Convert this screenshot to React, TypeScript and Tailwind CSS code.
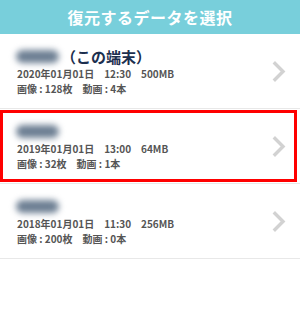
import React from 'react';

interface Backup {
    id: number;
    thisDevice: boolean;
    date: string;
    time: string;
    size: string;
    images: number;
    videos: number;
}

const backups: Backup[] = [
    { id: 0, thisDevice: true, date: '2020年01月01日', time: '12:30', size: '500MB', images: 128, videos: 4 },
    { id: 1, thisDevice: false, date: '2019年01月01日', time: '13:00', size: '64MB', images: 32, videos: 1 },
    { id: 2, thisDevice: false, date: '2018年01月01日', time: '11:30', size: '256MB', images: 200, videos: 0 },
];

const Chevron = () => (
    <svg width="15" height="21" viewBox="0 0 15 21" fill="none">
        <path d="M3 2.5 L11 10.5 L3 18.5" stroke="#d2d2d2" strokeWidth="3.4" strokeLinecap="square" strokeLinejoin="miter" />
    </svg>
);

const BackupRow = ({ item, selected }: { item: Backup; selected: boolean }) => (
    <div className="relative flex items-center h-[75px] border-b border-[#e8e8e8] pl-[17px] pr-[13px]">
        <div className="flex-1 flex flex-col">
            <div className="flex items-center h-[20px]">
                {/* device name is blurred out */}
                <div className="w-[43px] h-[13px] -ml-[1px] rounded-full bg-[#6d7f93] blur-[3px]" />
                {item.thisDevice && (
                    <span className="ml-[2px] text-[15px] font-bold text-[#1c2f4f] leading-none">（この端末）</span>
                )}
            </div>
            <p className="text-[10px] font-bold text-[#555] leading-[14px] mt-[1px] whitespace-pre">
                {`${item.date}　${item.time}　${item.size}`}
            </p>
            <p className="text-[10px] font-bold text-[#555] leading-[15px] whitespace-pre">
                {`画像 : ${item.images}枚　動画 : ${item.videos}本`}
            </p>
        </div>
        <Chevron />
        {selected && (
            <div className="absolute left-0 right-[3px] top-[1px] bottom-[1px] border-[3px] border-[#ff0000] pointer-events-none" />
        )}
    </div>
);

export default function App() {
    return (
        <div className="w-[300px] h-[320px] bg-white" style={{ fontFamily: '"Noto Sans CJK JP", "Noto Sans", sans-serif' }}>
            <div className="h-[34px] bg-[#78cfdb] flex items-center justify-center">
                <h1 className="text-[16px] font-bold text-white tracking-[0.5px]">復元するデータを選択</h1>
            </div>
            {backups.map((b) => (
                <BackupRow key={b.id} item={b} selected={b.id === 1} />
            ))}
        </div>
    );
}
